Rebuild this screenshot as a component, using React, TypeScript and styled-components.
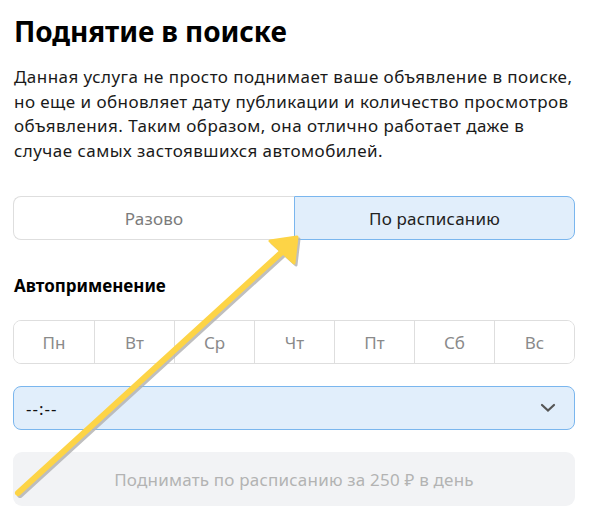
import React, { useState } from 'react'
import styled, { createGlobalStyle } from 'styled-components'

const GlobalStyle = createGlobalStyle`
  html, body {
    margin: 0;
    padding: 0;
    background: #fff;
  }
  body {
    font-family: 'Noto Sans', 'Open Sans', Arial, sans-serif;
    color: #000;
  }
`

const Page = styled.div`
  position: relative;
  width: 593px;
  height: 531px;
  box-sizing: border-box;
  padding: 12px 18px 0 13px;
  overflow: hidden;
`

const Title = styled.h1`
  margin: 0 0 0 1px;
  font-size: 28px;
  line-height: 38px;
  font-weight: 700;
  letter-spacing: -0.1px;
`

const Lead = styled.p`
  margin: 15px 0 0 1px;
  font-size: 17px;
  line-height: 24.5px;
  letter-spacing: 0.45px;
  color: #1a1a1a;
`

const Segments = styled.div`
  display: grid;
  grid-template-columns: 1fr 1fr;
  margin-top: 33px;
  height: 44px;
`

const Segment = styled.button<{ $active?: boolean; $side: 'left' | 'right' }>`
  font: inherit;
  font-size: 17px;
  letter-spacing: 0.2px;
  cursor: pointer;
  box-sizing: border-box;
  height: 44px;
  border: 1px solid ${(p) => (p.$active ? '#7ab6ee' : '#dedede')};
  background: ${(p) => (p.$active ? '#e1eefb' : '#fff')};
  color: ${(p) => (p.$active ? '#222' : '#7b7b7b')};
  border-radius: ${(p) => (p.$side === 'left' ? '8px 0 0 8px' : '0 8px 8px 0')};
  ${(p) => (p.$side === 'left' && !p.$active ? 'border-right: none;' : '')}
`

const SubTitle = styled.h2`
  margin: 34px 0 0 1px;
  font-size: 17px;
  line-height: 24px;
  font-weight: 700;
`

const Days = styled.div`
  display: grid;
  grid-template-columns: repeat(7, 1fr);
  margin-top: 22px;
  height: 44px;
  box-sizing: border-box;
  border: 1px solid #dedede;
  border-radius: 8px;
  overflow: hidden;
`

const Day = styled.button`
  font: inherit;
  font-size: 17px;
  color: #8a8a8a;
  background: #fff;
  border: none;
  border-left: 1px solid #dedede;
  cursor: pointer;
  &:first-child {
    border-left: none;
  }
`

const Select = styled.div`
  display: flex;
  align-items: center;
  justify-content: space-between;
  margin-top: 22px;
  height: 44px;
  box-sizing: border-box;
  padding: 0 18px 0 12px;
  background: #e1eefb;
  border: 1px solid #7ab6ee;
  border-radius: 8px;
  font-size: 17px;
  letter-spacing: 1px;
  color: #111;
`

const Submit = styled.button`
  display: block;
  width: 100%;
  margin-top: 22px;
  height: 54px;
  font: inherit;
  font-size: 17px;
  letter-spacing: 0.2px;
  color: #b3b3b3;
  background: #f2f3f5;
  border: none;
  border-radius: 9px;
`

const Overlay = styled.svg`
  position: absolute;
  left: 0;
  top: 0;
  pointer-events: none;
`

const Chevron = () => (
  <svg width="16" height="10" viewBox="0 0 16 10">
    <path d="M2 2l6 5.5L14 2" fill="none" stroke="#555" strokeWidth="2.2" strokeLinecap="round" />
  </svg>
)

// pointer arrow drawn on top of the form
const Arrow = () => (
  <Overlay width="593" height="531" viewBox="0 0 593 531">
    <g transform="translate(2 2)" fill="#b4b4b4" stroke="#b4b4b4" opacity="0.85">
      <path d="M18 493 L282 252" strokeWidth="6" strokeLinecap="round" />
      <path d="M297 237 L270 241 L294 263 Z" strokeWidth="3" strokeLinejoin="round" />
    </g>
    <g fill="#fdd446" stroke="#fdd446">
      <path d="M18 493 L282 252" strokeWidth="6" strokeLinecap="round" />
      <path d="M297 237 L270 241 L294 263 Z" strokeWidth="3" strokeLinejoin="round" />
    </g>
  </Overlay>
)

const days = ['Пн', 'Вт', 'Ср', 'Чт', 'Пт', 'Сб', 'Вс']

export default function App() {
  const [mode, setMode] = useState<'once' | 'schedule'>('schedule')

  return (
    <Page>
      <GlobalStyle />
      <Title>Поднятие в поиске</Title>
      <Lead>
        Данная услуга не просто поднимает ваше объявление в поиске, но еще и обновляет дату
        публикации и количество просмотров объявления. Таким образом, она отлично работает даже в
        случае самых застоявшихся автомобилей.
      </Lead>
      <Segments>
        <Segment $side="left" $active={mode === 'once'} onClick={() => setMode('once')}>
          Разово
        </Segment>
        <Segment $side="right" $active={mode === 'schedule'} onClick={() => setMode('schedule')}>
          По расписанию
        </Segment>
      </Segments>
      <SubTitle>Автоприменение</SubTitle>
      <Days>
        {days.map((d) => (
          <Day key={d}>{d}</Day>
        ))}
      </Days>
      <Select>
        <span>--:--</span>
        <Chevron />
      </Select>
      <Submit disabled>Поднимать по расписанию за 250 ₽ в день</Submit>
      <Arrow />
    </Page>
  )
}
